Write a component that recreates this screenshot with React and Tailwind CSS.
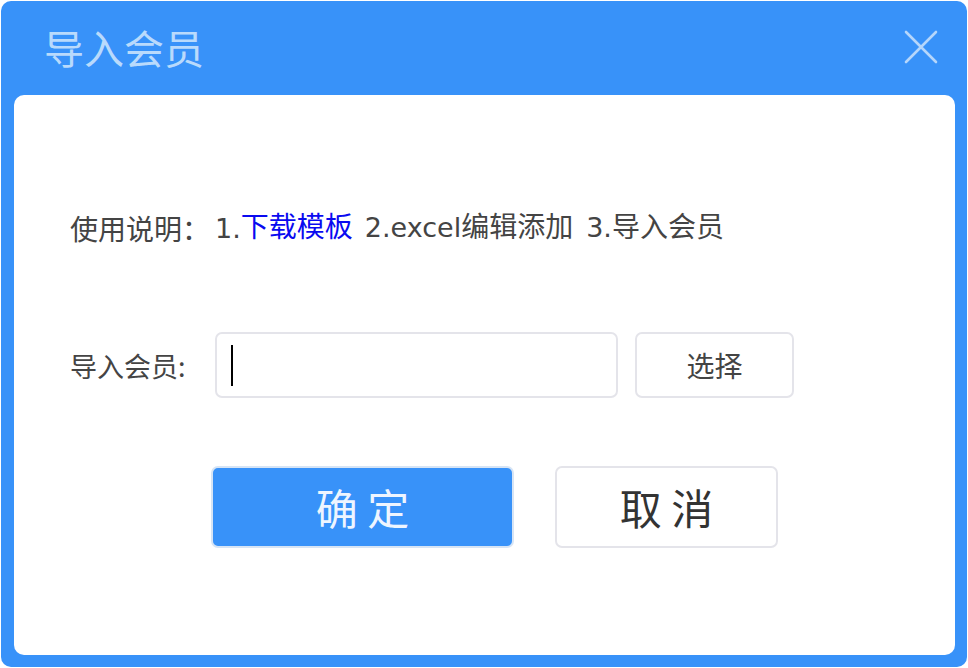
export default function App() {
  return (
    <div
      className="w-[968px] h-[668px] bg-white p-[1px]"
      style={{ fontFamily: '"Noto Sans CJK SC", "Noto Sans", sans-serif' }}
    >
      <div className="w-[966px] h-[666px] bg-[#3892f9] rounded-[10px] flex flex-col px-[13px] pb-[12px] pr-[12px]">
        {/* header */}
        <div className="h-[94px] flex items-center justify-between shrink-0">
          <span className="ml-[30px] text-[40px] leading-none text-[#b9dafc] -mt-[2px]">导入会员</span>
          <svg width="34" height="34" viewBox="0 0 34 34" className="mr-[17px] -mt-[2px]">
            <path d="M2 2 L32 32 M32 2 L2 32" stroke="#b5d6fb" strokeWidth="2.6" strokeLinecap="round" />
          </svg>
        </div>

        {/* body */}
        <div className="flex-1 bg-white rounded-[10px] pl-[56px] pt-[117px]">
          <div
            className="flex items-center h-[32px] text-[28px] text-[#444] leading-none"
            style={{ fontFamily: '"DejaVu Sans", "Noto Sans CJK SC", sans-serif' }}
          >
            <span className="w-[145px]" style={{ fontFamily: '"Noto Sans CJK SC", sans-serif' }}>使用说明：</span>
            <span className="text-[27px]">1.</span>
            <span className="text-[#0a0af0]">下载模板</span>
            <span className="ml-[12px]">
              <span className="text-[27px]">2.excel</span>编辑添加
            </span>
            <span className="ml-[13px]">
              <span className="text-[27px]">3.</span>导入会员
            </span>
          </div>

          <div className="flex items-center mt-[88px] h-[66px]">
            <span className="w-[145px] text-[27px] text-[#444] leading-none">导入会员:</span>
            <div className="w-[403px] h-[66px] border-2 border-[#e4e4ea] rounded-[7px] flex items-center pl-[14px]">
              <div className="w-[2px] h-[41px] bg-black" />
            </div>
            <button className="ml-[17px] w-[159px] h-[66px] border-2 border-[#e4e4ea] rounded-[7px] text-[28px] text-[#444] leading-none bg-white">
              选择
            </button>
          </div>

          <div className="flex mt-[68px] pl-[141px]">
            <button className="w-[303px] h-[82px] bg-[#3892f9] border-2 border-[#d6e4f5] rounded-[7px] text-[42px] text-[#eef5ff] leading-none">
              确 定
            </button>
            <button className="ml-[41px] w-[223px] h-[82px] bg-white border-2 border-[#e4e4ea] rounded-[7px] text-[42px] text-[#333] leading-none">
              取 消
            </button>
          </div>
        </div>
      </div>
    </div>
  )
}
